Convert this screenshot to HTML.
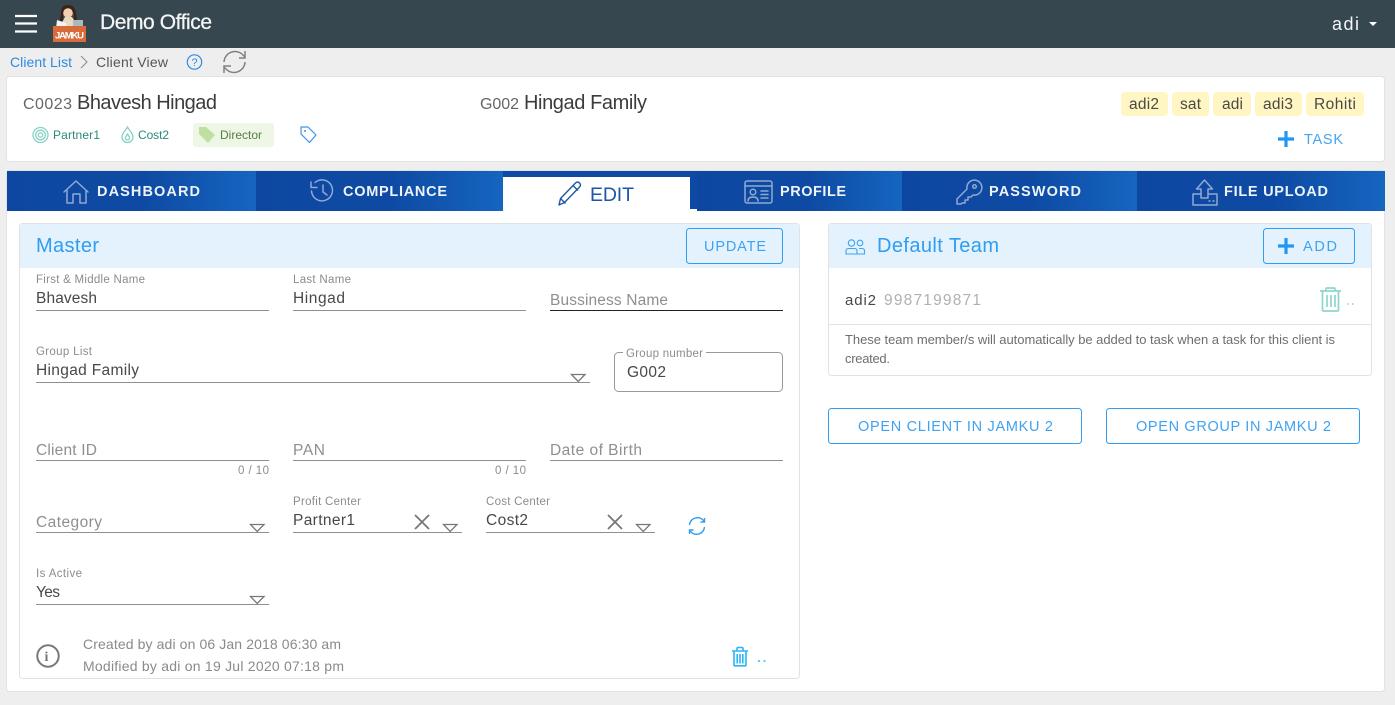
<!DOCTYPE html>
<html lang="en"><head><meta charset="utf-8"><title>Demo Office</title>
<style>
html,body{margin:0;padding:0;width:1395px;height:705px;overflow:hidden;background:#eee}
svg{display:block;position:absolute;left:0;top:0}
text{font-family:"Liberation Sans",sans-serif;white-space:pre}
.lb{font-size:11.5px;fill:#8c8c8c}
.v{font-size:15.5px;fill:#484848}
.ph{font-size:15.5px;fill:#8f8f8f}
.tab{font-size:14.5px;font-weight:bold;fill:#eef3fa}
.ti{font-size:20px;fill:#2f9df0}
.btn{font-size:14.5px;fill:#3ea2f2}
.chip{font-size:15.5px;fill:#4a4a42}
.ln{stroke:#8f8f8f;stroke-width:1}
.tri{fill:#fff;stroke:#777;stroke-width:1.3}
.x{stroke:#777;stroke-width:1.8;fill:none}
.ic{fill:none;stroke:#8fa9d2;stroke-width:1.5;stroke-linejoin:round;stroke-linecap:round}
</style></head><body>
<svg width="1395" height="705" viewBox="0 0 1395 705" xmlns="http://www.w3.org/2000/svg">
<defs>
<linearGradient id="g"><stop offset="0" stop-color="#0d47a1"/><stop offset=".55" stop-color="#0e4aa3"/><stop offset="1" stop-color="#1565c0"/></linearGradient>
</defs>
<rect width="1395" height="705" fill="#eee"/>
<!-- header -->
<rect width="1395" height="48" fill="#37474f"/>
<path d="M15 16H37M15 23.500H37M15 31.500H37" stroke="#fff" stroke-width="2.200"/>
<!-- logo -->
<path d="M60 26l5-9h7l6 9z" fill="#e8dcc0"/>
<path d="M61 13q0-8 7-8t8 8l1 8h-3V13H63v8h-3z" fill="#3b2417"/>
<circle cx="68" cy="13" r="4.800" fill="#f5cfae"/>
<path d="M57 20l9 3 1 5H56z" fill="#f2f2f2"/>
<rect x="73" y="20" width="10" height="7" fill="#a9b9c0"/>
<rect x="53" y="26" width="33" height="16" fill="#d96a3a"/>
<text x="55" y="38.500" font-size="9.500" font-weight="bold" fill="#fff" textLength="29">JAMKU</text>
<text x="100" y="29" font-size="21" fill="#f4f6f7" stroke="#f4f6f7" stroke-width=".25" textLength="112">Demo Office</text>
<text x="1332" y="30" font-size="18" fill="#f4f6f7" textLength="27">adi</text>
<path d="M1369 22h8l-4 4z" fill="#fff"/>
<!-- breadcrumb -->
<text x="10" y="67" font-size="14" fill="#2f8be0" textLength="62">Client List</text>
<path d="M81 56l6 6-6 6" fill="none" stroke="#888" stroke-width="1"/>
<text x="96" y="67" font-size="14" fill="#555" textLength="72">Client View</text>
<circle cx="194.500" cy="62" r="7.200" fill="none" stroke="#2f8be0" stroke-width="1.200"/>
<text x="191.500" y="66" font-size="11" fill="#2f8be0">?</text>
<g fill="none" stroke="#808080" stroke-width="1.500">
<path d="M224 62a11 11 0 0 1 19-7l2 2M245 62a11 11 0 0 1-19 7l-2-2"/>
<path d="M245 51v7h-6M224 73v-7h7"/>
</g>
<!-- client card -->
<rect x="6.500" y="76.500" width="1378" height="85" rx="3" fill="#fff" stroke="#e2e2e2"/>
<text x="23" y="109" font-size="16" fill="#666" textLength="49">C0023</text>
<text x="77" y="109" font-size="20" fill="#3c3c3c" textLength="140">Bhavesh Hingad</text>
<text x="480" y="109" font-size="16" fill="#666" textLength="39">G002</text>
<text x="524" y="109" font-size="20" fill="#3c3c3c" textLength="123">Hingad Family</text>
<g fill="none" stroke="#86d2c6" stroke-width="1.300">
<circle cx="40.500" cy="135" r="7.500"/><circle cx="40.500" cy="135" r="4.800"/><circle cx="40.500" cy="135" r="2.200"/>
<path d="M127.500 127c-2 4-5.500 6-5.500 10a5.500 5.500 0 0 0 11 0c0-4-3.500-6-5.500-10z"/><path d="M127.500 134c-1 1.500-2 2.500-2 4a2 2 0 0 0 4 0c0-1.500-1-2.500-2-4z"/>
</g>
<text x="53" y="139" font-size="12" fill="#2a8a7c" textLength="47">Partner1</text>
<text x="138" y="139" font-size="12" fill="#2a8a7c" textLength="31">Cost2</text>
<rect x="193" y="123" width="81" height="24" rx="3" fill="#eef6e6"/>
<path d="M199 127h7l9 8-7 8-9-9z" fill="#bfe0a0"/>
<text x="220" y="139" font-size="12" fill="#557f42" textLength="42">Director</text>
<path d="M301 127h7l8 8-6.500 7.500L301 134z" fill="none" stroke="#3f93e6" stroke-width="1.200" stroke-linejoin="round"/>
<circle cx="305" cy="131" r="1" fill="#3f93e6"/>
<g fill="#fff6c4">
<rect x="1121" y="92" width="47" height="24" rx="4"/><rect x="1172" y="92" width="37" height="24" rx="4"/><rect x="1213" y="92" width="38" height="24" rx="4"/><rect x="1255" y="92" width="47" height="24" rx="4"/><rect x="1306" y="92" width="58" height="24" rx="4"/>
</g>
<text class="chip" x="1129" y="109" textLength="30">adi2</text>
<text class="chip" x="1180" y="109" textLength="21">sat</text>
<text class="chip" x="1222" y="109" textLength="21">adi</text>
<text class="chip" x="1263" y="109" textLength="30">adi3</text>
<text class="chip" x="1314" y="109" textLength="42">Rohiti</text>
<path d="M1286 131v16M1278 139h16" stroke="#2196f3" stroke-width="3.200"/>
<text x="1304" y="144" font-size="14.500" fill="#42a5f5" textLength="39">TASK</text>
<!-- main card -->
<rect x="6.500" y="170.500" width="1378" height="521" rx="3" fill="#fff" stroke="#e2e2e2"/>
<rect x="7" y="171" width="249" height="40" fill="url(#g)"/>
<rect x="256" y="171" width="247" height="40" fill="url(#g)"/>
<rect x="503" y="171" width="194" height="38" fill="#0e4aa3"/>
<rect x="697" y="171" width="205" height="40" fill="url(#g)"/>
<rect x="902" y="171" width="235" height="40" fill="url(#g)"/>
<rect x="1137" y="171" width="248" height="40" fill="url(#g)"/>
<rect x="503" y="177" width="187" height="34" fill="#fff"/>
<rect x="690" y="209" width="7" height="2" fill="#fff"/>
<!-- tab icons -->
<g class="ic">
<path d="M64 192l12-11 12 11M67 190v13h6v-9h7v9h6v-13"/>
<path d="M315 182.500a10.500 10.500 0 1 1-3.500 8.500M311 182v5.500h6M323 185v7l4 3"/>
<rect x="745" y="181" width="27" height="22" rx="2"/><path d="M745 186h27M761 191h7M761 194.500h7M761 198h7"/><circle cx="753" cy="192" r="2.800"/><path d="M748 201q0-4 5-4t5 4"/>
<path d="M957 204v-5l10-10a7.500 7.500 0 1 1 6 6l-2 2h-3v3h-3v3h-3l-1 1z"/><circle cx="974.500" cy="186.500" r="1.800"/>
<path d="M1204.500 180l-8 9h4.500v9h7v-9h4.500z"/><path d="M1201 194h-8v11h24v-11h-8"/><path d="M1209 201h1M1213 201h1"/>
</g>
<path d="M559 205l1.500-6.500 15-15.500q2-2 4 0t0 4l-15 15.500z M573 185.500l5 5 M560.500 198.500l5 5" fill="none" stroke="#1e56a8" stroke-width="1.400" stroke-linejoin="round"/>
<text class="tab" x="97" y="196" textLength="103">DASHBOARD</text>
<text class="tab" x="343" y="196" textLength="104">COMPLIANCE</text>
<text x="590" y="201" font-size="19.500" fill="#1e56a8" textLength="44">EDIT</text>
<text class="tab" x="780" y="196" textLength="66">PROFILE</text>
<text class="tab" x="989" y="196" textLength="92">PASSWORD</text>
<text class="tab" x="1224" y="196" textLength="104">FILE UPLOAD</text>
<!-- master panel -->
<rect x="19.500" y="223.500" width="780" height="455" rx="3" fill="#fff" stroke="#dfe3e6"/>
<path d="M20 268V227q0-3 3-3H796q3 0 3 3V268z" fill="#e3f2fd"/>
<text class="ti" x="36" y="252" textLength="63">Master</text>
<rect x="686.500" y="228.500" width="96" height="35" rx="3" fill="none" stroke="#2f9df0"/>
<text class="btn" x="704" y="251" textLength="62">UPDATE</text>
<text class="lb" x="36" y="283" textLength="109">First &amp; Middle Name</text>
<text class="v" x="36" y="303" textLength="61">Bhavesh</text>
<path class="ln" d="M36 310.500H269"/>
<text class="lb" x="293" y="283" textLength="58">Last Name</text>
<text class="v" x="293" y="303" textLength="52">Hingad</text>
<path class="ln" d="M293 310.500H526"/>
<text class="ph" x="550" y="305" textLength="118">Bussiness Name</text>
<path d="M550 310.500H783" stroke="#222" stroke-width="1"/>
<text class="lb" x="36" y="355" textLength="56">Group List</text>
<text class="v" x="36" y="375" textLength="103">Hingad Family</text>
<path class="ln" d="M36 382.500H590"/>
<polygon class="tri" points="571.500,374.500 585,374.500 578.200,381.500"/>
<rect x="614.500" y="352.500" width="168" height="39" rx="4" fill="none" stroke="#999"/>
<rect x="623" y="350" width="83" height="5" fill="#fff"/>
<text class="lb" x="626" y="357" textLength="77">Group number</text>
<text class="v" x="627" y="377" textLength="39">G002</text>
<text class="ph" x="36" y="455" textLength="61">Client ID</text>
<path class="ln" d="M36 460.500H269"/>
<text class="lb" x="238" y="474" textLength="31">0 / 10</text>
<text class="ph" x="293" y="455" textLength="32">PAN</text>
<path class="ln" d="M293 460.500H526"/>
<text class="lb" x="495" y="474" textLength="31">0 / 10</text>
<text class="ph" x="550" y="455" textLength="92">Date of Birth</text>
<path class="ln" d="M550 460.500H783"/>
<text class="ph" x="36" y="527" textLength="66">Category</text>
<path class="ln" d="M36 532.500H269"/>
<polygon class="tri" points="250.500,524.500 264,524.500 257.200,531.500"/>
<text class="lb" x="293" y="505" textLength="68">Profit Center</text>
<text class="v" x="293" y="525" textLength="62">Partner1</text>
<path class="x" d="M415 515l14 14M429 515l-14 14"/>
<path class="ln" d="M293 532.500H462"/>
<polygon class="tri" points="443.500,524.500 457,524.500 450.200,531.500"/>
<text class="lb" x="486" y="505" textLength="64">Cost Center</text>
<text class="v" x="486" y="525" textLength="42">Cost2</text>
<path class="x" d="M608 515l14 14M622 515l-14 14"/>
<path class="ln" d="M486 532.500H655"/>
<polygon class="tri" points="636.500,524.500 650,524.500 643.200,531.500"/>
<g fill="none" stroke="#2f9df0" stroke-width="1.400">
<path d="M689.500 525a8 8 0 0 1 13.500-5l1.500 1.500M704.500 527a8 8 0 0 1-13.500 5l-1.500-1.500"/>
<path d="M704.500 518v4h-4M689.500 534v-4h4"/>
</g>
<text class="lb" x="36" y="577" textLength="46">Is Active</text>
<text class="v" x="36" y="597" textLength="24">Yes</text>
<path class="ln" d="M36 604.500H269"/>
<polygon class="tri" points="250.500,596.500 264,596.500 257.200,603.500"/>
<circle cx="48" cy="656" r="10.700" fill="none" stroke="#777" stroke-width="2"/>
<text x="44.500" y="661" font-size="14" font-weight="bold" fill="#777" style="font-family:'Liberation Serif',serif">i</text>
<text x="83" y="649" font-size="14" fill="#8a8a8a" textLength="258">Created by adi on 06 Jan 2018 06:30 am</text>
<text x="83" y="671" font-size="14" fill="#8a8a8a" textLength="261">Modified by adi on 19 Jul 2020 07:18 pm</text>
<g fill="none" stroke="#29b6f6" stroke-width="1.600">
<path d="M732 651h16M737 651v-2.500q0-1 1-1h4q1 0 1 1v2.500M734 651v14q0 .8 .8 .8h10.400q.8 0 .8-.8v-14M737.200 654v9.500M740 654v9.500M742.800 654v9.500"/>
</g>
<path d="M758 661h2M763.500 661h2" stroke="#29b6f6" stroke-width="1.500"/>
<!-- team panel -->
<rect x="828.500" y="223.500" width="543" height="152" rx="3" fill="#fff" stroke="#dfe3e6"/>
<path d="M829 268V227q0-3 3-3H1368q3 0 3 3V268z" fill="#e3f2fd"/>
<g fill="none" stroke="#3ea2f2" stroke-width="1.100">
<circle cx="851.500" cy="243" r="3.200"/><circle cx="860" cy="243" r="2.800"/>
<path d="M846 254v-3q0-2.500 2.500-2.500h6q2.500 0 2.500 2.500v3zM859 248.500h3q2.500 0 2.500 2.500v3H857"/>
</g>
<text class="ti" x="877" y="252" textLength="122">Default Team</text>
<rect x="1263.500" y="228.500" width="91" height="35" rx="3" fill="none" stroke="#2f9df0"/>
<path d="M1286 238v16M1278 246h16" stroke="#2196f3" stroke-width="3.200"/>
<text class="btn" x="1303" y="251" textLength="34">ADD</text>
<text x="845" y="305" font-size="15" fill="#484848" textLength="31">adi2</text>
<text x="884" y="305" font-size="15.500" fill="#b0b0b0" textLength="97">9987199871</text>
<g fill="none" stroke="#8fd6cb" stroke-width="1.700">
<path d="M1320 291h21M1326 291v-2q0-1 1-1h7q1 0 1 1v2M1322.500 291v19q0 1 1 1h14q1 0 1-1v-19M1327 295v12M1331 295v12M1335 295v12"/>
</g>
<path d="M1347 304h1.500M1352 304h1.500" stroke="#999" stroke-width="1"/>
<path d="M829 324.500H1371" stroke="#e2e2e2"/>
<text x="845" y="344" font-size="13" fill="#6e6e6e" textLength="490">These team member/s will automatically be added to task when a task for this client is</text>
<text x="845" y="363" font-size="13" fill="#6e6e6e" textLength="45">created.</text>
<rect x="828.500" y="408.500" width="253" height="35" rx="3" fill="#fff" stroke="#2f9df0"/>
<text class="btn" x="858" y="431" textLength="195">OPEN CLIENT IN JAMKU 2</text>
<rect x="1106.500" y="408.500" width="253" height="35" rx="3" fill="#fff" stroke="#2f9df0"/>
<text class="btn" x="1136" y="431" textLength="195">OPEN GROUP IN JAMKU 2</text>
</svg>
</body></html>
